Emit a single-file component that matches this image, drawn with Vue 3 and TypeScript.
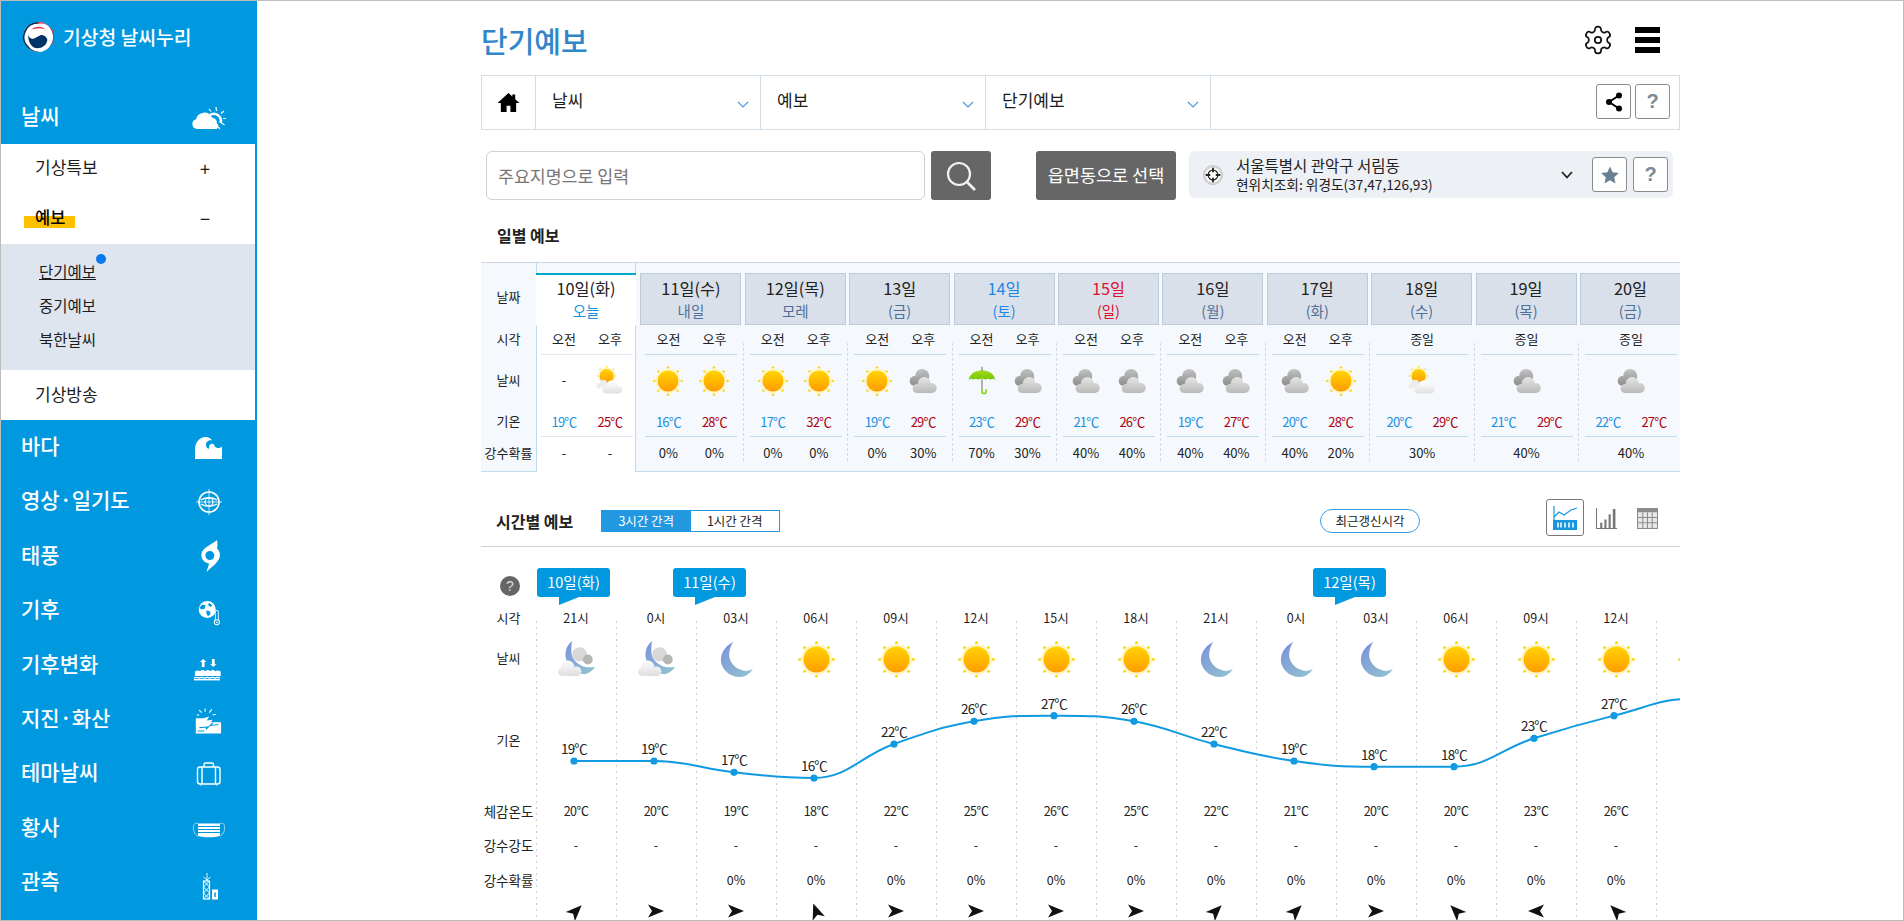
<template>
  <div class="page">
    <!-- shared icon symbols -->
    <svg class="defs" aria-hidden="true">
      <defs>
        <linearGradient id="g-sun" x1="0" y1="0" x2="0" y2="1">
          <stop offset="0" stop-color="#ffd400" />
          <stop offset="1" stop-color="#ff9c00" />
        </linearGradient>
        <linearGradient id="g-moon" x1="0" y1="0" x2="1" y2="1">
          <stop offset="0" stop-color="#7a90dc" />
          <stop offset="1" stop-color="#93c7cf" />
        </linearGradient>
        <linearGradient id="g-white" gradientUnits="userSpaceOnUse" x1="0" y1="18" x2="0" y2="35">
          <stop offset="0" stop-color="#ffffff" />
          <stop offset="1" stop-color="#dcdcdc" />
        </linearGradient>
        <linearGradient id="g-grey" gradientUnits="userSpaceOnUse" x1="0" y1="12" x2="0" y2="33">
          <stop offset="0" stop-color="#e8e8e8" />
          <stop offset="1" stop-color="#b8b8b8" />
        </linearGradient>
        <linearGradient id="g-dark" gradientUnits="userSpaceOnUse" x1="0" y1="3" x2="0" y2="24">
          <stop offset="0" stop-color="#c4c4c4" />
          <stop offset="1" stop-color="#8c8c8c" />
        </linearGradient>
        <linearGradient id="g-green" x1="0" y1="0" x2="0" y2="1">
          <stop offset="0" stop-color="#a6dc1e" />
          <stop offset="1" stop-color="#72c400" />
        </linearGradient>
      </defs>

      <symbol id="w-sun" viewBox="0 0 36 36">
        <circle cx="18" cy="18" r="15" fill="#fff5c4" />
        <circle cx="18" cy="18" r="12.6" fill="url(#g-sun)" />
        <g fill="#ffd800">
          <circle cx="18" cy="1.6" r="1.4" /><circle cx="18" cy="34.4" r="1.4" />
          <circle cx="1.6" cy="18" r="1.4" /><circle cx="34.4" cy="18" r="1.4" />
          <circle cx="6.4" cy="6.4" r="1.4" /><circle cx="29.6" cy="6.4" r="1.4" />
          <circle cx="6.4" cy="29.6" r="1.4" /><circle cx="29.6" cy="29.6" r="1.4" />
        </g>
      </symbol>
      <symbol id="w-cloud" viewBox="0 0 36 36">
        <g fill="url(#g-dark)">
          <circle cx="17" cy="12" r="8.5" />
          <circle cx="8" cy="18" r="6" />
        </g>
        <g fill="url(#g-grey)">
          <circle cx="19.500" cy="21" r="7.8" />
          <circle cx="11" cy="27" r="5.5" />
          <circle cx="28.500" cy="26.500" r="6" />
          <rect x="11" y="24" width="18" height="8.500" />
        </g>
      </symbol>
      <symbol id="w-partly" viewBox="0 0 36 36">
        <circle cx="14" cy="12" r="10.500" fill="#fff5c4" />
        <circle cx="14" cy="12" r="8.500" fill="url(#g-sun)" />
        <g fill="#ffd800">
          <circle cx="14" cy="1" r="1" /><circle cx="3" cy="12" r="1" />
          <circle cx="6" cy="4" r="1" /><circle cx="22" cy="4" r="1" /><circle cx="25" cy="12" r="1" />
        </g>
        <g fill="#ececec">
          <circle cx="5" cy="24" r="3.200" /><circle cx="10" cy="21" r="4.500" />
        </g>
        <g fill="url(#g-white)">
          <circle cx="20.500" cy="24" r="7" />
          <circle cx="13.500" cy="28" r="4.800" />
          <circle cx="28" cy="28" r="5" />
          <rect x="13.500" y="26" width="15" height="7" />
        </g>
      </symbol>
      <symbol id="w-rain" viewBox="0 0 36 36">
        <path d="M2 17C3 9 10 5 18 5s15 4 16 12c-2-2-4-2-5.500-.5C27 15 24 15 22.500 16.500 21 15 15 15 13.500 16.500 12 15 9 15 7.500 16.500 6 15 4 15 2 17z" fill="url(#g-green)" />
        <path d="M18 1v5" stroke="#777" stroke-width="1.300" />
        <path d="M18 16v13" stroke="#777" stroke-width="1.300" />
        <path d="M18 28v2.500a2.500 2.500 0 0 0 5 0V28" fill="none" stroke="#84cc10" stroke-width="1.800" />
      </symbol>
      <symbol id="w-moon" viewBox="0 0 36 36">
        <path d="M15 1C6 5 2 13 3 21c2 9 10 14 18 14 6 0 10-3 13-8-3 2-8 3-12 1C14 25 10 18 11 11c.5-4 2-7 4-10z" fill="url(#g-moon)" />
      </symbol>
      <symbol id="w-mooncloud" viewBox="0 0 36 36">
        <path d="M14 0C8 4 6 12 8 18c2 8 9 15 18 14 4-.5 8-3 10-7-3 1-9 1-13-1-7-3-10-9-10-14 0-4 0-7 1-10z" fill="url(#g-moon)" />
        <path d="M14 0c-1 3-1 6-1 10 0 5 3 11 10 14 4 2 10 2 13 1-2 4-6 6.500-10 7-3 0-6 0-8-2" fill="none" />
        <circle cx="21" cy="13" r="7" fill="#d8d8d8" />
        <circle cx="29" cy="18" r="4.800" fill="#b6b6b6" />
        <g fill="url(#g-white)">
          <circle cx="9.500" cy="25.500" r="6.500" />
          <circle cx="3.800" cy="30" r="3.800" />
          <circle cx="18" cy="29.500" r="4.800" />
          <rect x="4" y="28" width="17" height="6" />
        </g>
      </symbol>

      <symbol id="i-sky" viewBox="0 0 34 34">
        <g transform="translate(0 7)">
          <g stroke="#fff" stroke-width="1.200" fill="none">
            <path d="M19 4.500l-2-2.500M24.500 4l-.5-4M29 6.500l3-2.500M31 11.500h3M29.500 16l3 2M26 19.500l2 2.500" />
            <path d="M18 8a7 7 0 0 1 10.500 8" stroke-width="2.600" />
          </g>
          <path d="M5 22a5 5 0 0 1-1-9.800A8.500 8.500 0 0 1 20 10.500a6 6 0 0 1 5 6 3.200 3.200 0 0 1-.5 5.500z" fill="#fff" />
        </g>
      </symbol>
      <symbol id="i-wave" viewBox="0 0 34 34">
        <path d="M3 28V18.500C3 11 8 6 13.500 6c3 0 5.500 1.500 6.500 3.500-3-.8-6 1.200-6 4.500 0 2.200 1.300 3.700 3.300 3.700-.8-2.700.7-5 3-5 2.500 0 1.800 4.300 5.700 4.300 1.500 0 2.800-.5 3.600-1.300.4.300.4.600.4 1V28z" fill="#fff" />
      </symbol>
      <symbol id="i-target" viewBox="0 0 34 34">
        <g fill="none" stroke="#fff">
          <circle cx="17" cy="17" r="10" stroke-width="1.600" />
          <circle cx="17" cy="17" r="4" stroke-width="1.200" />
          <path d="M17 4v26M4 17h26" stroke-width="1" opacity=".8" />
          <path d="M9 15c4-3 11-3 16 0M9 19c4 3 11 3 16 0" stroke-width="1.300" />
        </g>
      </symbol>
      <symbol id="i-storm" viewBox="0 0 34 34">
        <path fill-rule="evenodd" d="M25 1c.5 3 .8 6 0 8.500 2.500 2 3.500 5 2.700 8.500-1 5-7 9-13.200 15 .5-3 2.500-6.500 2.500-8.500-5-.8-8.500-5-7.500-10 1.200-6 9-8 15.500-13.500zM17.800 12a4.500 4.500 0 1 0 .1 9 4.500 4.500 0 0 0-.1-9z" fill="#fff" />
      </symbol>
      <symbol id="i-globe" viewBox="0 0 34 34">
        <g transform="translate(2.500 4.500) scale(.85)">
          <circle cx="15" cy="13" r="10" fill="#fff" />
          <path d="M9 7l4 1-1 4-4 1-2-2zM14 14l4 1 1 3-3 3-2-3zM17 5l4 3-2 2-3-2z" fill="#0099e0" />
          <rect x="24.500" y="14" width="3.600" height="13" rx="1.800" fill="#0099e0" stroke="#fff" />
          <circle cx="26.300" cy="28" r="3" fill="#0099e0" stroke="#fff" stroke-width="1.200" />
          <circle cx="26.300" cy="28" r="1" fill="#fff" />
        </g>
      </symbol>
      <symbol id="i-sea" viewBox="0 0 34 34">
        <g transform="translate(2 8) scale(.92 .74)">
          <path d="M8 4l3.500 4H9.500v7h-3V8H4.500zM19 15l-3.500-4h2V4h3v7h2z" fill="#fff" transform="translate(2 0)" />
          <path d="M1 27v-6c2-2 4-2 5.500-.5 2-2 4-2 5.500 0 2-2 4-2 5.500 0 2-2 4-2 5.500 0 2-1.500 4-1.500 6 .5v6z" fill="#fff" />
          <path d="M0 30c2-1.500 4-1.500 5.700 0 2-1.500 4-1.500 5.700 0 2-1.500 4-1.500 5.700 0 2-1.500 4-1.500 5.700 0 2-1.500 4-1.500 5.700 0" fill="none" stroke="#fff" stroke-width="1.500" />
          <rect x="0" y="31" width="28" height="2" fill="#fff" />
        </g>
      </symbol>
      <symbol id="i-quake" viewBox="0 0 34 34">
        <g transform="translate(3 4) scale(.84 .8)">
          <path d="M1 33V14l9 0 7-2-3 5 7-1-2 3h12v14z" fill="#fff" />
          <path d="M5 26l10-1-2 3 8-8-2 3 9-1M3 30h8" fill="none" stroke="#0099e0" stroke-width="1.300" />
          <path d="M12 2v4M5 4l3 3M20 3l-3 4M25 9l-4 1M2 10h3" stroke="#fff" stroke-width="1.300" />
        </g>
      </symbol>
      <symbol id="i-bag" viewBox="0 0 34 34">
        <g fill="none" stroke="#fff" stroke-width="1.400">
          <rect x="5.500" y="10" width="22.500" height="17" rx="2.500" />
          <path d="M12 10V7.500a1.500 1.500 0 0 1 1.500-1.500h6.500a1.500 1.500 0 0 1 1.500 1.500V10M10 10v17M23.500 10v17" />
          <path d="M9 27.500v1M24.500 27.500v1" />
        </g>
      </symbol>
      <symbol id="i-mask" viewBox="0 0 34 34">
        <path d="M6 12.500h22v12.500c-6 1.700-16 1.700-22 0z" fill="#fff" />
        <path d="M6 15.500h22M6 18.500h22M6 21.500h22" stroke="#0099e0" stroke-width="1" />
        <path d="M6 12.500C2 11.500 1 13.500 1.500 18.500c.3 3 2 5.500 4.500 6.500M28 12.500c4-1 5 1 4.500 6-.3 3-2 5.500-4.500 6.500" fill="none" stroke="#fff" stroke-width=".8" opacity=".7" />
      </symbol>
      <symbol id="i-tower" viewBox="0 0 34 34">
        <g stroke="#fff" fill="none">
          <path d="M15 7v8M11.500 11l3.500 3 3.500-3" stroke-width=".9" />
          <rect x="11.500" y="15" width="6" height="18" stroke-width="1.200" />
          <path d="M11.500 15l6 6M17.500 15l-6 6M11.500 21l6 6M17.500 21l-6 6M11.500 27l6 6M17.500 27l-6 6" stroke-width="1" />
          <rect x="20.500" y="24" width="5" height="9" fill="#fff" />
        </g>
        <path d="M22.300 26.500h1.500v4.500h-1.500z" fill="#0099e0" />
      </symbol>
    </svg>

    <aside class="side">
      <div class="brand">
        <svg class="logo" viewBox="0 0 34 34">
          <circle cx="17" cy="17" r="16" fill="#fff" />
          <path d="M17 1a16 16 0 0 1 12 26.600A14 14 0 0 0 17 3z" fill="#e0243e" />
          <path d="M5 27.600A16 16 0 0 1 17 1v2A14 14 0 0 0 7 27a14 14 0 0 0 22 .6A16 16 0 0 1 5 27.600z" fill="#0b2f5c" />
          <path d="M6.500 13c0 4 3 6 6 5.500 3-.5 5-3.500 8.500-3.500 3 0 5.500 1.500 6 5-1 6-5.500 9-10.500 9C10 29 6 22 6.500 13z" fill="#003468" />
          <path d="M6.500 13C8 8 12 6 17 6c5 0 10 4 10 14-1-3-3-5-6-5-3.500 0-5.500 3-8.500 3.500-3 .5-6-1.500-6-5.500z" fill="#fff" />
          <path d="M10 9c2-2 5-3 8-3 3 0 6 1.400 8 4-2-1.500-5-2.500-8-2.300-3 .2-6 .5-8 1.300z" fill="#e0243e" />
        </svg>
        <span>기상청 날씨누리</span>
      </div>

      <div class="nav-row">
        <span>날씨</span>
        <svg class="nav-ico"><use href="#i-sky" /></svg>
      </div>
      <div class="sub">
        <div class="sub-row"><span>기상특보</span><i>+</i></div>
        <div class="sub-row sub-open"><span class="hl">예보</span><i>−</i></div>
        <ul class="sub-list">
          <li class="on"><a>단기예보</a><em></em></li>
          <li><a>중기예보</a></li>
          <li><a>북한날씨</a></li>
        </ul>
        <div class="sub-row sub-last"><span>기상방송</span></div>
      </div>
      <div v-for="n in navItems" :key="n.name" class="nav-row">
        <span>{{ n.name }}</span>
        <svg class="nav-ico"><use :href="'#i-' + n.ico" /></svg>
      </div>
    </aside>

    <main class="main">
      <header class="top">
        <h1>단기예보</h1>
        <div class="top-tools">
          <svg class="gear" viewBox="0 0 24 24" fill="none" stroke="#111" stroke-width="1.300">
            <path d="M12.220 2h-.44a2 2 0 0 0-2 2v.18a2 2 0 0 1-1 1.730l-.43.25a2 2 0 0 1-2 0l-.15-.08a2 2 0 0 0-2.730.73l-.22.38a2 2 0 0 0 .73 2.730l.15.1a2 2 0 0 1 1 1.720v.51a2 2 0 0 1-1 1.740l-.15.09a2 2 0 0 0-.73 2.730l.22.38a2 2 0 0 0 2.730.73l.15-.08a2 2 0 0 1 2 0l.43.25a2 2 0 0 1 1 1.730V20a2 2 0 0 0 2 2h.44a2 2 0 0 0 2-2v-.18a2 2 0 0 1 1-1.730l.43-.25a2 2 0 0 1 2 0l.15.08a2 2 0 0 0 2.730-.73l.22-.39a2 2 0 0 0-.73-2.730l-.15-.08a2 2 0 0 1-1-1.740v-.5a2 2 0 0 1 1-1.740l.15-.09a2 2 0 0 0 .73-2.730l-.22-.38a2 2 0 0 0-2.730-.73l-.15.08a2 2 0 0 1-2 0l-.43-.25a2 2 0 0 1-1-1.730V4a2 2 0 0 0-2-2z" />
            <circle cx="12" cy="12" r="2.400" />
          </svg>
          <div class="burger"><b></b><b></b><b></b></div>
        </div>
      </header>

      <nav class="crumbs">
        <div class="crumb-home">
          <svg viewBox="0 0 24 22" width="23" height="21"><path d="M12 1L0.500 11.500H4V21h6v-6.500h4V21h6v-9.500h3.500L19 7.500V2.500h-3v2.300z" fill="#000" /></svg>
        </div>
        <div v-for="c in crumbs" :key="c" class="crumb">
          <span>{{ c }}</span>
          <svg viewBox="0 0 12 7" width="12" height="7"><path d="M1 1l5 5 5-5" fill="none" stroke="#4a9be0" stroke-width="1.200" /></svg>
        </div>
        <div class="crumb-tools">
          <button class="box">
            <svg viewBox="0 0 20 20" width="20" height="20">
              <path d="M15 3.500L5 10l10 6.500" fill="none" stroke="#000" stroke-width="2" />
              <circle cx="15" cy="3.500" r="3" /><circle cx="5" cy="10" r="3" /><circle cx="15" cy="16.500" r="3" />
            </svg>
          </button>
          <button class="box q">?</button>
        </div>
      </nav>

      <section class="search-row">
        <div class="search-input">주요지명으로 입력</div>
        <button class="search-btn">
          <svg viewBox="0 0 32 32" width="32" height="32" fill="none" stroke="#f2f2f2" stroke-width="2.200">
            <circle cx="14" cy="14" r="11" /><path d="M22 22l8 8" stroke-width="2.600" />
          </svg>
        </button>
        <button class="pick-btn">읍면동으로 선택</button>
        <div class="loc">
          <svg class="loc-ico" viewBox="0 0 22 22">
            <circle cx="11" cy="11" r="10.500" fill="#d9d9d9" stroke="#aaa" stroke-width=".6" />
            <circle cx="11" cy="11" r="8" fill="#fff" />
            <circle cx="11" cy="11" r="5.400" fill="none" stroke="#222" stroke-width="1.300" />
            <path d="M11 3v5M11 14v5M3 11h5M14 11h5" stroke="#222" stroke-width="2" />
          </svg>
          <div class="loc-text">
            <div class="loc-name">서울특별시 관악구 서림동</div>
            <div class="loc-sub">현위치조회: 위경도(37,47,126,93)</div>
          </div>
          <svg class="loc-chev" viewBox="0 0 12 8" width="12" height="8"><path d="M1 1l5 5.500L11 1" fill="none" stroke="#222" stroke-width="1.800" /></svg>
          <button class="box star">
            <svg viewBox="0 0 20 20" width="20" height="20"><path d="M10 1.500l2.600 5.800 6.300.7-4.700 4.200 1.300 6.200L10 15.300l-5.500 3.100 1.300-6.200L1.100 8l6.300-.7z" fill="#68808f" /></svg>
          </button>
          <button class="box q">?</button>
        </div>
      </section>

      <h2 class="sec-title daily-title">일별 예보</h2>

      <section class="daily">
        <div class="d-labels">
          <div class="d-tab-l">날짜</div>
          <div class="d-time">시각</div>
          <div class="d-ico">날씨</div>
          <div class="d-temp">기온</div>
          <div class="d-pop">강수확률</div>
        </div>
        <div v-for="(d, i) in days" :key="d.date" class="day" :class="{ today: i === 0, dashed: i > 0 && i < days.length - 1 }">
          <div class="tab" :class="d.tone">
            <div class="tab-date">{{ d.date }}</div>
            <div class="tab-sub">{{ d.sub }}</div>
          </div>
          <div class="day-in">
            <div class="d-time line">
              <span v-for="t in d.allDay ? ['종일'] : ['오전', '오후']" :key="t">{{ t }}</span>
            </div>
            <div class="d-ico">
              <span v-for="(w, k) in d.sky" :key="k">
                <template v-if="w === '-'">-</template>
                <svg v-else class="w-day"><use :href="'#w-' + w" /></svg>
              </span>
            </div>
            <div class="d-temp line">
              <span class="low">{{ d.low }}℃</span>
              <span class="high">{{ d.high }}℃</span>
            </div>
            <div class="d-pop">
              <span v-for="(p, k) in d.pop" :key="k">{{ p }}</span>
            </div>
          </div>
        </div>
      </section>

      <div class="sec-title hour-title">
        <h2>시간별 예보</h2>
        <div class="toggle"><span class="on">3시간 간격</span><span>1시간 간격</span></div>
        <div class="pill">최근갱신시각</div>
        <button class="view on">
          <svg viewBox="0 0 26 26" width="26" height="26">
            <path d="M2 1v17" stroke="#1597e0" stroke-width="1.200" />
            <path d="M2 12l5-5 5 3 7-5 6-2" fill="none" stroke="#1597e0" stroke-width="1.300" />
            <rect x="1" y="15" width="24" height="10" fill="#1597e0" />
            <path d="M6 17.500v5M9 17.500v5M13 17.500v5M17 17.500v5M21 17.500v5" stroke="#fff" stroke-width="1.500" />
          </svg>
        </button>
        <svg class="view-ico" viewBox="0 0 20 20" width="21" height="21">
          <path d="M.5 0v19.500H20" fill="none" stroke="#777" />
          <path d="M4 14h2v5H4zM8 11h2v8H8zM12 6h2v13h-2zM16 1h2.500v18H16z" fill="#777" />
        </svg>
        <svg class="view-ico" viewBox="0 0 20 20" width="21" height="21">
          <rect x="0" y="0" width="20" height="20" fill="#8c8c8c" />
          <path d="M1 4h18v15H1z" fill="#e8e8e8" />
          <path d="M1 9h18M1 14h18M5.500 4v15M10 4v15M14.500 4v15" stroke="#8c8c8c" />
        </svg>
      </div>

      <section class="hourly">
        <div class="help">?</div>
        <div v-for="b in bubbles" :key="b.text" class="bubble" :style="{ left: b.left + 'px' }">{{ b.text }}</div>

        <div class="h-labels">
          <div class="h-time">시각</div>
          <div class="h-ico">날씨</div>
          <div class="h-chart">기온</div>
          <div class="h-feel">체감온도</div>
          <div class="h-rain">강수강도</div>
          <div class="h-pop">강수확률</div>
        </div>
        <div v-for="(h, i) in hours" :key="i" class="hour">
          <div class="h-time">{{ h.time }}</div>
          <div class="h-ico"><svg class="w-hour"><use :href="'#w-' + h.sky" /></svg></div>
          <template v-if="h.time">
            <div class="h-chart"></div>
            <div class="h-feel">{{ h.feel }}℃</div>
            <div class="h-rain">-</div>
            <div class="h-pop">{{ h.pop }}</div>
            <div class="h-wind">
              <svg viewBox="0 0 18 18" width="18" height="18" :style="{ transform: 'rotate(' + h.wind + 'deg)' }">
                <path d="M17 9L1 2.500 5 9l-4 6.500z" fill="#111" />
              </svg>
            </div>
          </template>
        </div>

        <svg class="chart" width="1144" height="108">
          <path :d="curve" fill="none" stroke="#0f9ae2" stroke-width="2" />
          <g v-for="p in points.slice(0, 14)" :key="p.x">
            <circle :cx="p.x" :cy="p.y" r="3.600" fill="#0f9ae2" />
            <text :x="p.x" :y="p.y - 7" text-anchor="middle" class="chart-text">{{ p.t }}℃</text>
          </g>
        </svg>
      </section>
    </main>
  </div>
</template>

<script setup lang="ts">
import { computed } from 'vue'

const navItems = [
  { name: '바다', ico: 'wave' },
  { name: '영상·일기도', ico: 'target' },
  { name: '태풍', ico: 'storm' },
  { name: '기후', ico: 'globe' },
  { name: '기후변화', ico: 'sea' },
  { name: '지진·화산', ico: 'quake' },
  { name: '테마날씨', ico: 'bag' },
  { name: '황사', ico: 'mask' },
  { name: '관측', ico: 'tower' },
]

const crumbs = ['날씨', '예보', '단기예보']

const days = [
  { date: '10일(화)', sub: '오늘', tone: '', sky: ['-', 'partly'], low: 19, high: 25, pop: ['-', '-'] },
  { date: '11일(수)', sub: '내일', tone: '', sky: ['sun', 'sun'], low: 16, high: 28, pop: ['0%', '0%'] },
  { date: '12일(목)', sub: '모레', tone: '', sky: ['sun', 'sun'], low: 17, high: 32, pop: ['0%', '0%'] },
  { date: '13일', sub: '(금)', tone: '', sky: ['sun', 'cloud'], low: 19, high: 29, pop: ['0%', '30%'] },
  { date: '14일', sub: '(토)', tone: 'sat', sky: ['rain', 'cloud'], low: 23, high: 29, pop: ['70%', '30%'] },
  { date: '15일', sub: '(일)', tone: 'sun', sky: ['cloud', 'cloud'], low: 21, high: 26, pop: ['40%', '40%'] },
  { date: '16일', sub: '(월)', tone: '', sky: ['cloud', 'cloud'], low: 19, high: 27, pop: ['40%', '40%'] },
  { date: '17일', sub: '(화)', tone: '', sky: ['cloud', 'sun'], low: 20, high: 28, pop: ['40%', '20%'] },
  { date: '18일', sub: '(수)', tone: '', allDay: true, sky: ['partly'], low: 20, high: 29, pop: ['30%'] },
  { date: '19일', sub: '(목)', tone: '', allDay: true, sky: ['cloud'], low: 21, high: 29, pop: ['40%'] },
  { date: '20일', sub: '(금)', tone: '', allDay: true, sky: ['cloud'], low: 22, high: 27, pop: ['40%'] },
]

const bubbles = [
  { text: '10일(화)', left: 56 },
  { text: '11일(수)', left: 192 },
  { text: '12일(목)', left: 832 },
]

const hours = [
  { time: '21시', sky: 'mooncloud', feel: 20, pop: '', wind: -45 },
  { time: '0시', sky: 'mooncloud', feel: 20, pop: '', wind: 0 },
  { time: '03시', sky: 'moon', feel: 19, pop: '0%', wind: 0 },
  { time: '06시', sky: 'sun', feel: 18, pop: '0%', wind: -110 },
  { time: '09시', sky: 'sun', feel: 22, pop: '0%', wind: 0 },
  { time: '12시', sky: 'sun', feel: 25, pop: '0%', wind: 0 },
  { time: '15시', sky: 'sun', feel: 26, pop: '0%', wind: 0 },
  { time: '18시', sky: 'sun', feel: 25, pop: '0%', wind: 0 },
  { time: '21시', sky: 'moon', feel: 22, pop: '0%', wind: -45 },
  { time: '0시', sky: 'moon', feel: 21, pop: '0%', wind: -45 },
  { time: '03시', sky: 'moon', feel: 20, pop: '0%', wind: 0 },
  { time: '06시', sky: 'sun', feel: 20, pop: '0%', wind: -135 },
  { time: '09시', sky: 'sun', feel: 23, pop: '0%', wind: 180 },
  { time: '12시', sky: 'sun', feel: 26, pop: '0%', wind: -135 },
  // only the edge of this sun shows at the right, the rest scrolls out of view
  { time: '', sky: 'sun', feel: 0, pop: '', wind: 0 },
]

const temps = [19, 19, 17, 16, 22, 26, 27, 26, 22, 19, 18, 18, 23, 27, 30]

const points = temps.map((t, i) => ({
  t,
  x: 38 + 80 * i,
  y: 75 - (t - 19) * 5.67,
}))

// monotone spline, flat at the local extremes like the site's chart
const curve = computed(() => {
  const pts = points
  const slopes = pts.map((p, i) => {
    if (i === 0 || i === pts.length - 1) return 0
    const a = p.y - pts[i - 1].y
    const b = pts[i + 1].y - p.y
    if (a * b <= 0) return 0
    return (a + b) / 160
  })
  let d = `M${pts[0].x} ${pts[0].y}`
  for (let i = 0; i < pts.length - 1; i++) {
    const p = pts[i]
    const q = pts[i + 1]
    const dx = 34
    d += ` C${p.x + dx} ${p.y + slopes[i] * dx} ${q.x - dx} ${q.y - slopes[i + 1] * dx} ${q.x} ${q.y}`
  }
  return d
})
</script>

<style>
html, body { margin: 0; padding: 0; background: #fff; }
</style>

<style scoped>
* { box-sizing: border-box; }

.page {
  display: flex;
  width: 1904px;
  height: 921px;
  border: 1px solid #bdbdbd;
  overflow: hidden;
  font-family: "Noto Sans CJK KR", "Noto Sans", sans-serif;
  font-size: 13px;
  color: #222;
  position: relative;
}

.defs { position: absolute; width: 0; height: 0; }

button { padding: 0; font-family: inherit; cursor: pointer; }

/* sidebar */
.side {
  flex: none;
  width: 256px;
  background: #0099e0;
  color: #fff;
}

.brand {
  height: 89px;
  padding: 20px 0 0 21px;
  display: flex;
  align-items: flex-start;
  gap: 9px;
  font-size: 19.300px;
  font-weight: 500;
  line-height: 32px;
}

.logo { width: 32px; height: 32px; flex: none; }

.nav-row {
  height: 54.4px;
  padding: 0 31px 0 20px;
  display: flex;
  align-items: center;
  justify-content: space-between;
  font-size: 21px;
  font-weight: 500;
}

.nav-row span { margin-top: -5px; }

.nav-ico { width: 34px; height: 34px; flex: none; }

.sub {
  margin-right: 2px;
  height: 276px;
  background: #fff;
  color: #1c1c1c;
  font-size: 17px;
}

.sub-row {
  height: 48px;
  padding: 0 44px 0 34px;
  display: flex;
  align-items: center;
  justify-content: space-between;
}

.sub-row > span { margin-top: -4px; }

.sub-row i {
  font-style: normal;
  font-size: 18px;
  width: 12px;
  text-align: center;
}

.sub-open { height: 52px; font-weight: 700; }
.sub-open i { font-weight: 400; }

.sub-row > .hl {
  padding: 0 10px 0 11px;
  margin: -2px 0 0 -11px;
  background: linear-gradient(transparent 16px, #ffc000 16px, #ffc000 28px, transparent 28px);
  line-height: 34px;
  height: 34px;
  color: #000;
  font-weight: 500;
  font-size: 16.500px;
}

.sub-list {
  list-style: none;
  margin: 0;
  height: 126px;
  padding: 10px 0 0 38px;
  background: #dfe5ee;
  font-size: 15.500px;
}

.sub-list li { height: 34px; line-height: 34px; position: relative; }
.sub-list .on a { text-decoration: underline; }
.sub-list em {
  position: absolute;
  left: 57px;
  top: 0;
  width: 10px;
  height: 10px;
  border-radius: 50%;
  background: #0a78f0;
}

.sub-last { height: 50px; }

/* main column */
.main {
  flex: none;
  width: 1199px;
  margin-left: 224px;
  overflow: hidden;
  height: 919px;
}

.top {
  height: 74px;
  padding: 4px 20px 0 0;
  display: flex;
  align-items: center;
  justify-content: space-between;
}

.top h1 {
  margin: 0;
  font-size: 29px;
  font-weight: 500;
  color: #2f86c9;
}

.top-tools { display: flex; align-items: center; gap: 21px; }
.gear { width: 32px; height: 32px; }
.burger { width: 25px; display: flex; flex-direction: column; gap: 4px; }
.burger b { height: 6px; background: #000; }

.crumbs {
  display: flex;
  height: 55px;
  border: 1px solid #d3dde6;
}

.crumb-home {
  width: 54px;
  border-right: 1px solid #d3dde6;
  display: flex;
  align-items: center;
  justify-content: center;
}

.crumb {
  width: 225px;
  border-right: 1px solid #d3dde6;
  display: flex;
  align-items: center;
  justify-content: space-between;
  padding: 0 11px 0 16px;
  font-size: 17px;
  color: #1c1c1c;
}

.crumb span { margin-top: -6px; }
.crumb svg { margin-top: 3px; }

.crumb-tools {
  flex: 1;
  display: flex;
  justify-content: flex-end;
  align-items: center;
  gap: 4px;
  padding: 0 9px 2px 0;
}

.box {
  width: 35px;
  height: 35px;
  background: #fff;
  border: 1px solid #8c8c8c;
  border-radius: 3px;
  display: flex;
  align-items: center;
  justify-content: center;
}

.q {
  font-size: 20px;
  font-weight: 700;
  color: #7a8a96;
  font-family: "Liberation Sans", sans-serif;
}

.search-row {
  display: flex;
  margin-top: 21px;
  padding-left: 5px;
  height: 49px;
}

.search-input {
  width: 439px;
  border: 1px solid #cfd2d6;
  border-radius: 6px;
  padding-left: 11px;
  line-height: 47px;
  font-size: 17.300px;
  color: #777;
}

.search-btn {
  width: 60px;
  margin-left: 6px;
  border: 0;
  border-radius: 3px;
  background: #666;
  display: flex;
  align-items: center;
  justify-content: center;
}

.pick-btn {
  width: 140px;
  margin-left: 45px;
  padding-bottom: 3px;
  border: 0;
  border-radius: 3px;
  background: #666;
  color: #fff;
  font-size: 17.500px;
}

.loc {
  width: 484px;
  height: 47px;
  margin-left: 13px;
  padding: 0 5px 0 14px;
  display: flex;
  align-items: center;
  background: #edf0f5;
  border-radius: 6px;
}

.loc-ico { width: 20px; height: 20px; flex: none; }
.loc-text { margin-left: 13px; width: 325px; }
.loc-name { font-size: 15.500px; line-height: 20px; color: #222; }
.loc-sub { font-size: 13.700px; line-height: 19px; color: #222; }
.loc-chev { flex: none; }
.star { margin-left: 19px; }
.loc .q { margin-left: 6px; }

.sec-title { margin: 0; font-weight: 700; font-size: 16px; color: #222; }

.daily-title {
  height: 63px;
  padding: 24px 0 0 16px;
  line-height: 22px;
  border-bottom: 1px solid #cfd6de;
}

/* daily table */
.daily {
  display: flex;
  height: 209px;
  padding-top: 10px;
  background: #f5f9fd;
  border-bottom: 1px solid #bddcec;
}

.d-labels { flex: none; width: 55px; text-align: center; }
.d-labels .d-tab-l { height: 52px; padding-top: 5px; line-height: 38px; }
.d-labels .d-pop { white-space: nowrap; }
.d-labels .d-temp { line-height: 24px; }

.d-time { height: 30px; line-height: 28px; }
.d-ico { height: 54px; line-height: 50px; }
.d-temp { height: 28px; line-height: 26px; }
.d-pop { height: 32px; line-height: 32px; }

.day {
  flex: none;
  width: 104.400px;
  position: relative;
  text-align: center;
}

.day.dashed::after {
  content: "";
  position: absolute;
  top: 70px;
  height: 118px;
  right: 1px;
  border-right: 1px dashed #d4d9de;
}

.day.today {
  width: 100px;
  margin-right: 4.400px;
  margin-top: -10px;
  padding-top: 10px;
  margin-bottom: -1px;
  background: linear-gradient(#f5f9fd 10px, #fff 10px);
  border-left: 1px solid #bddcec;
  border-right: 1px solid #bddcec;
}

.tab {
  width: 101px;
  height: 52px;
  padding-top: 2px;
  background: #dae0e9;
  border: 1px solid #bccbd9;
}

.today .tab {
  width: 100px;
  margin-left: -1px;
  background: #fff;
  border: 0;
  border-top: 2px solid #00a6cc;
  padding-top: 1px;
}

.tab-date { font-size: 16.300px; line-height: 24px; color: #222; }
.tab-sub { font-size: 14.500px; line-height: 22px; color: #4f6f98; }
.today .tab-sub { color: #1b8fe0; }
.tab.sat .tab-date, .tab.sat .tab-sub { color: #1e88e5; }
.tab.sun .tab-date, .tab.sun .tab-sub { color: #e0102f; }

.day-in { width: 92px; margin-left: 5px; }
.today .day-in { margin-left: 4px; }

.day-in > div { display: flex; }
.day-in span { flex: 1; text-align: center; }
.day-in .line { border-bottom: 1px solid #c3d9ec; }
.today .day-in .line { border-bottom-color: #e3e6ea; }

.w-day { width: 30px; height: 30px; vertical-align: middle; }

.low { color: #1a8fe0; letter-spacing: -.8px; }
.high { color: #b00010; letter-spacing: -.8px; }

/* hourly */
.hour-title {
  display: flex;
  align-items: center;
  height: 75px;
  padding: 23px 0 0 15px;
  border-bottom: 1px solid #d2d2d2;
}

.hour-title h2 { margin: 0; font-size: 16px; font-weight: 700; width: 105px; }

.toggle {
  display: flex;
  width: 179px;
  height: 22px;
  border: 1px solid #2298e0;
  font-size: 12.500px;
  font-weight: 400;
  line-height: 20px;
  text-align: center;
}

.toggle span { flex: 1; }
.toggle .on { background: #2298e0; color: #fff; }

.pill {
  width: 100px;
  height: 24px;
  margin-left: 540px;
  border: 1px solid #3aa0e0;
  border-radius: 12px;
  font-size: 12.500px;
  font-weight: 400;
  line-height: 22px;
  text-align: center;
}

.view {
  width: 38px;
  height: 37px;
  margin: -6px 0 0 126px;
  background: #fff;
  border: 1px solid #777;
  border-radius: 3px;
  display: flex;
  align-items: center;
  justify-content: center;
}

.view-ico { margin: -4px 0 0 12px; flex: none; }
.view-ico:last-child { margin-left: 20px; }

.hourly {
  position: relative;
  display: flex;
  height: 373px;
  padding-top: 60px;
  text-align: center;
}

.help {
  position: absolute;
  left: 19px;
  top: 29px;
  width: 20px;
  height: 20px;
  border-radius: 50%;
  background: #666;
  color: #ddd;
  font-size: 14px;
  line-height: 20px;
  text-align: center;
  font-family: "Liberation Sans", sans-serif;
}

.bubble {
  position: absolute;
  top: 21px;
  width: 73px;
  height: 29px;
  background: #0099e0;
  border-radius: 3px;
  color: #fff;
  font-size: 14.500px;
  line-height: 27px;
  text-align: center;
  z-index: 2;
}

.bubble::after {
  content: "";
  position: absolute;
  left: 22px;
  top: 29px;
  border-left: 0 solid transparent;
  border-right: 20px solid transparent;
  border-top: 8.500px solid #0099e0;
}

.h-labels { flex: none; width: 55px; }
.h-labels > div { white-space: nowrap; }
.h-labels .h-feel, .h-labels .h-pop, .h-labels .h-rain { font-size: 13.500px; }

.h-time { height: 23px; line-height: 22px; }
.h-ico { height: 56px; line-height: 56px; }
.h-chart { height: 108px; line-height: 108px; }
.h-feel { height: 34px; line-height: 34px; }
.h-rain { height: 34px; line-height: 34px; }
.h-pop { height: 36px; line-height: 36px; }
.h-wind { height: 22px; padding-top: 4px; }

.hour {
  flex: none;
  width: 80px;
  position: relative;
}

.hour::before {
  content: "";
  position: absolute;
  left: 0;
  top: 14px;
  bottom: 0;
  width: 1px;
  background: repeating-linear-gradient(#cfcfcf 0 2px, transparent 2px 6px);
}

.hour .h-feel, .hour .h-rain, .hour .h-pop, .hour .h-time { font-size: 12.500px; }
.hour .h-feel { letter-spacing: -.6px; }

.w-hour { width: 37px; height: 37px; vertical-align: middle; }

.chart {
  position: absolute;
  left: 55px;
  top: 139px;
  overflow: hidden;
}

.chart-text { font-size: 13.500px; fill: #222; letter-spacing: -.8px; }
</style>
